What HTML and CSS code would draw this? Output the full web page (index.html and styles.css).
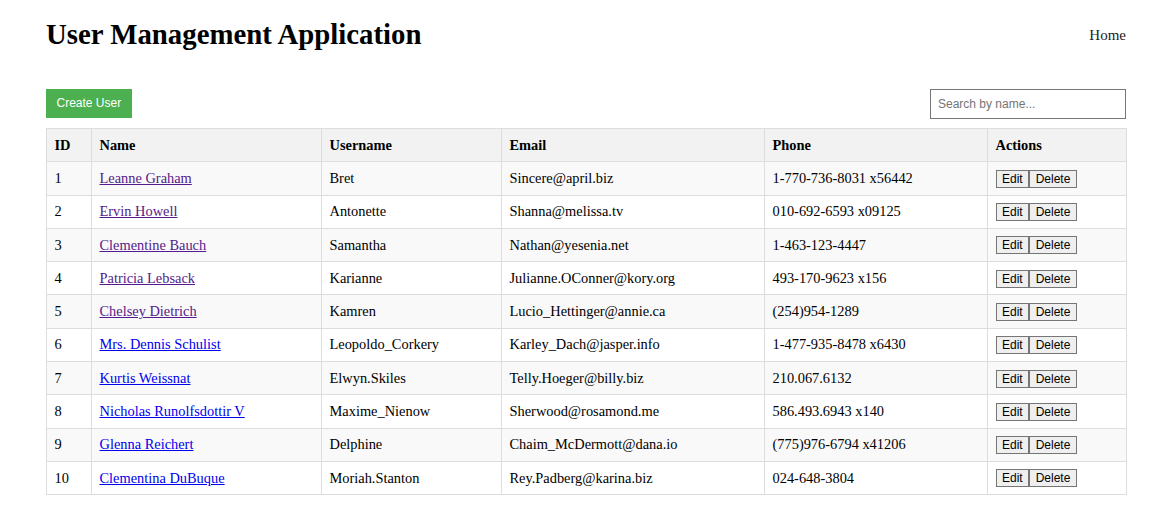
FILE: index.html
```html
<!DOCTYPE html>
<html lang="en">
<head>
<meta charset="utf-8">
<title>User Management Application</title>
<link rel="stylesheet" href="styles.css">
</head>
<body>
<div class="app">
  <header class="header">
    <h1 class="title">User Management Application</h1>
    <nav class="nav"><span class="nav-link">Home</span></nav>
  </header>
  <div class="toolbar">
    <button class="btn-create">Create User</button>
    <input class="search" type="text" placeholder="Search by name...">
  </div>
  <table class="users">
    <thead>
      <tr>
        <th class="c-id">ID</th>
        <th class="c-name">Name</th>
        <th class="c-user">Username</th>
        <th class="c-email">Email</th>
        <th class="c-phone">Phone</th>
        <th class="c-actions">Actions</th>
      </tr>
    </thead>
    <tbody>
      <tr><td>1</td><td><a class="link visited" href="#">Leanne Graham</a></td><td>Bret</td><td>Sincere@april.biz</td><td>1-770-736-8031 x56442</td><td><button class="act">Edit</button><button class="act">Delete</button></td></tr>
      <tr><td>2</td><td><a class="link visited" href="#">Ervin Howell</a></td><td>Antonette</td><td>Shanna@melissa.tv</td><td>010-692-6593 x09125</td><td><button class="act">Edit</button><button class="act">Delete</button></td></tr>
      <tr><td>3</td><td><a class="link visited" href="#">Clementine Bauch</a></td><td>Samantha</td><td>Nathan@yesenia.net</td><td>1-463-123-4447</td><td><button class="act">Edit</button><button class="act">Delete</button></td></tr>
      <tr><td>4</td><td><a class="link visited" href="#">Patricia Lebsack</a></td><td>Karianne</td><td>Julianne.OConner@kory.org</td><td>493-170-9623 x156</td><td><button class="act">Edit</button><button class="act">Delete</button></td></tr>
      <tr><td>5</td><td><a class="link visited" href="#">Chelsey Dietrich</a></td><td>Kamren</td><td>Lucio_Hettinger@annie.ca</td><td>(254)954-1289</td><td><button class="act">Edit</button><button class="act">Delete</button></td></tr>
      <tr><td>6</td><td><a class="link" href="#">Mrs. Dennis Schulist</a></td><td>Leopoldo_Corkery</td><td>Karley_Dach@jasper.info</td><td>1-477-935-8478 x6430</td><td><button class="act">Edit</button><button class="act">Delete</button></td></tr>
      <tr><td>7</td><td><a class="link" href="#">Kurtis Weissnat</a></td><td>Elwyn.Skiles</td><td>Telly.Hoeger@billy.biz</td><td>210.067.6132</td><td><button class="act">Edit</button><button class="act">Delete</button></td></tr>
      <tr><td>8</td><td><a class="link" href="#">Nicholas Runolfsdottir V</a></td><td>Maxime_Nienow</td><td>Sherwood@rosamond.me</td><td>586.493.6943 x140</td><td><button class="act">Edit</button><button class="act">Delete</button></td></tr>
      <tr><td>9</td><td><a class="link" href="#">Glenna Reichert</a></td><td>Delphine</td><td>Chaim_McDermott@dana.io</td><td>(775)976-6794 x41206</td><td><button class="act">Edit</button><button class="act">Delete</button></td></tr>
      <tr><td>10</td><td><a class="link" href="#">Clementina DuBuque</a></td><td>Moriah.Stanton</td><td>Rey.Padberg@karina.biz</td><td>024-648-3804</td><td><button class="act">Edit</button><button class="act">Delete</button></td></tr>
    </tbody>
  </table>
</div>
</body>
</html>
```
FILE: styles.css
```css
* { box-sizing: border-box; }
html, body { margin: 0; padding: 0; background: #fff; }
body {
  font-family: "Liberation Serif", "Times New Roman", serif;
  color: #000;
}
.app {
  margin: 0 31px 0 46px;
  padding-top: 18px;
}
.header {
  display: flex;
  justify-content: space-between;
  align-items: center;
  margin-bottom: 38px;
}
.title {
  margin: 0;
  font-size: 28.8px;
  font-weight: bold;
  line-height: normal;
}
.nav-link {
  font-size: 15px;
  color: #222;
}
.toolbar {
  display: flex;
  justify-content: space-between;
  align-items: flex-start;
  margin-bottom: 9px;
}
.btn-create {
  background: #4caf50;
  color: #fff;
  border: none;
  font-family: "Liberation Sans", Arial, sans-serif;
  font-size: 12px;
  line-height: 15px;
  padding: 7px 10.5px;
  height: 29px;
  margin: 0;
}
.search {
  width: 196px;
  height: 30px;
  border: 1px solid #767676;
  padding: 0 7px;
  font-family: "Liberation Sans", Arial, sans-serif;
  font-size: 12px;
  margin: 0;
}
.search::placeholder { color: #757575; }
.users {
  width: 100%;
  border-collapse: collapse;
  table-layout: fixed;
  font-size: 14.4px;
}
.users th, .users td {
  border: 1px solid #ddd;
  padding: 0 8px 0 7.5px;
  height: 33.3px;
  text-align: left;
  vertical-align: middle;
  white-space: nowrap;
}
.users th {
  background: #f2f2f2;
  font-weight: bold;
}
.users tbody tr:nth-child(odd) { background: #f9f9f9; }
.c-id { width: 45px; }
.c-name { width: 230px; }
.c-user { width: 180px; }
.c-email { width: 263px; }
.c-phone { width: 223px; }
.c-actions { width: 139px; }
.link { color: #0000ee; text-decoration: underline; }
.link.visited { color: #551a8b; }
.act {
  font-family: "Liberation Sans", Arial, sans-serif;
  font-size: 12px;
  padding: 1px 5.5px;
  margin: 0;
  background: #efefef;
  border: 1px solid #767676;
  border-radius: 0;
  color: #000;
  line-height: 14px;
  vertical-align: middle;
}
```
